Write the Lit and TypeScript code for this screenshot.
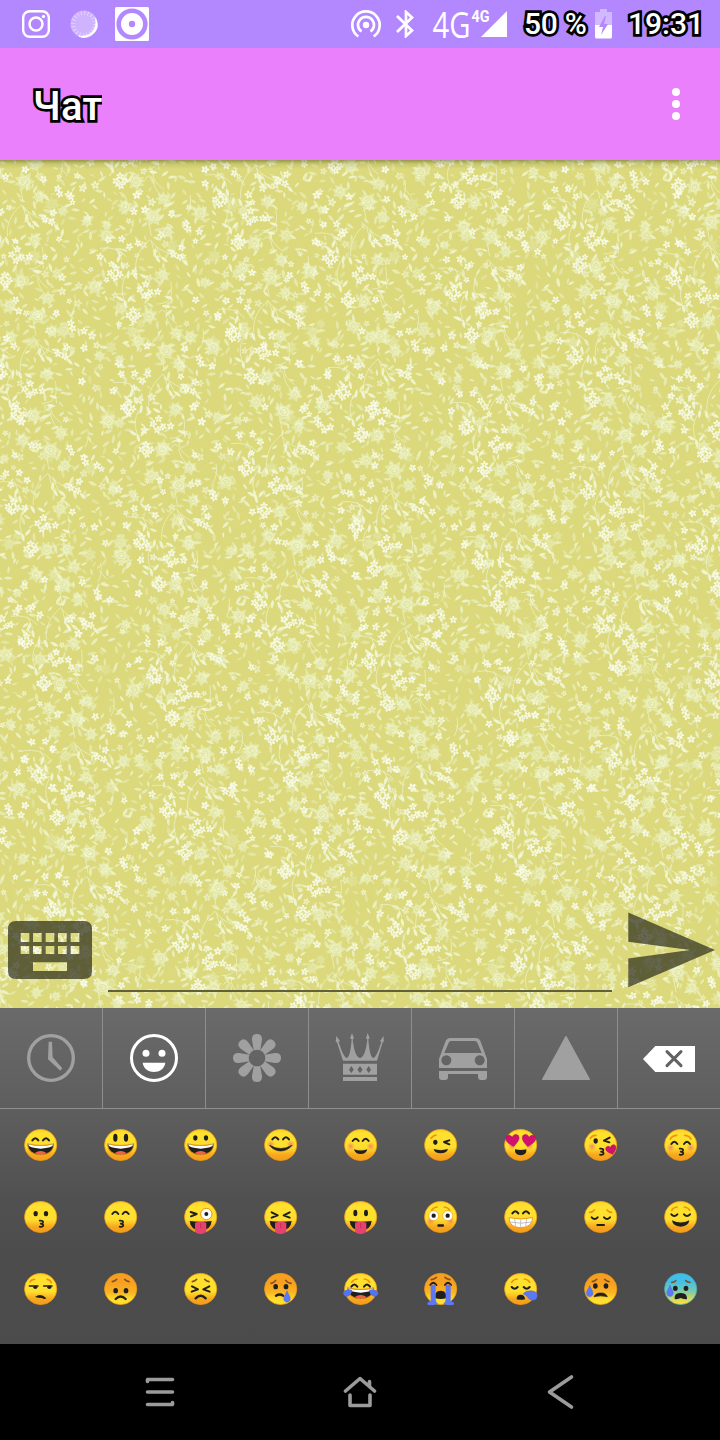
import { LitElement, html, svg, css } from "lit";
import { customElement } from "lit/decorators.js";

/* ---------- floral wallpaper, drawn in thirds of a pixel ---------- */

let seed = 77;
const rnd = () => {
  seed = (seed * 1664525 + 1013904223) >>> 0;
  return seed / 4294967296;
};

const leaf = (x: number, y: number, a: number, s = 1, o = 0.75) =>
  svg`<use href="#leaf" transform="translate(${x} ${y}) rotate(${a}) scale(${s})" opacity=${o}></use>`;
const star = (x: number, y: number, a: number, s = 1, o = 0.9) =>
  svg`<use href="#star" transform="translate(${x} ${y}) rotate(${a}) scale(${s})" opacity=${o}></use>`;
const rose = (x: number, y: number, a: number, s = 1, o = 0.75) =>
  svg`<use href="#rose" transform="translate(${x} ${y}) rotate(${a}) scale(${s})" opacity=${o}></use>`;

const roses: number[][] = [
  [8, -65, 0, 1.1], [52, -20, 60, 0.8], [40, -118, 20, 0.85], [-42, -170, 80, 0.95],
  [-165, 145, 10, 1], [38, 110, 40, 0.85], [-75, -95, 30, 0.9], [-130, -40, 0, 0.6], [-190, -50, 30, 0.7],
];
const stars: number[][] = [
  [-13, 138, 0], [-30, 154, 20], [0, 162, 40], [-17, 172, 10], [23, 160, 5],
  [-102, 90, 0], [-119, 104, 20], [-91, 108, 30], [-106, 118, 50],
  [-90, -187, 0], [-102, -172, 20], [-76, -172, 30], [-88, -158, 60],
  [-85, 2, 10], [-62, 25, 30], [-48, -80, 0], [70, 48, 0], [90, 56, 30], [95, 28, 20],
  [65, -72, 40], [-150, 55, 10], [-125, 4, 50], [108, -44, 10], [114, -28, 50],
  [148, -20, 0],
];
const leaves: number[][] = [
  [-66, 108, 100], [-45, 112, 70], [-20, 114, 30], [14, 42, 100], [22, 62, 60], [42, 64, 40],
  [62, 38, 10], [104, 72, 50], [-95, 60, 110], [-110, 78, 50], [-84, 82, 80], [-75, 196, 80],
  [-90, 182, 30], [-60, 180, 130], [55, 178, 20], [48, 205, 10],
];

const FIELD_W = 540;
const FIELD_H = 636;
const ambient: number[][] = [];
for (let gy = 0; gy < 23; gy++) {
  for (let gx = 0; gx < 18; gx++) {
    ambient.push([
      gx * 30 + rnd() * 28,
      gy * 27.65 + rnd() * 25,
      rnd() * 360,
      0.65 + rnd() * 0.5,
      0.3 + rnd() * 0.5,
      rnd(),
    ]);
  }
}

const field = svg`
  <g id="field">
    ${ambient.map(([x, y, a, s, o, k]) =>
      k < 0.035 ? rose(x, y, a, s * 0.8, o) : k < 0.17 ? star(x, y, a, s * 0.9, o + 0.15) : leaf(x, y, a, s * 1.05, o),
    )}
  </g>`;

const motif = svg`
  <g id="motif">
    <g class="stem">
      <path d="M0 4C-28 28-46 56-43 100M0 4C16 26 40 42 72 50M4 8L12 38M18 24L34 58"/>
      <path d="M62 130C68 170 66 196 20 197M62 172L66 196M48 206Q46 232 80 256"/>
      <path d="M-72 112Q-92 146-78 182M-150 30Q-100 22-70 56M-100 30L-84 66"/>
      <path d="M4-6L-2-40M8-180Q-4-196-14-178M8-178Q12-150 30-132"/>
      <path d="M120-130Q126-100 112-74M116-106L138-82"/>
    </g>
    ${leaves.map(([x, y, a]) => leaf(x, y, a, 1.1, 0.85))}
    ${roses.map(([x, y, a, s]) => rose(x, y, a, s))}
    ${stars.map(([x, y, a]) => star(x, y, a, 0.92, 0.85))}
  </g>`;

const columns: number[][] = [
  [-280, -30], [65, 130], [450, 235], [765, 15], [1095, 190], [1465, 295], [1790, 85], [2125, 250],
];
const placements: number[][] = [];
for (const [cx, cy] of columns) {
  for (let r = -1; r < 7; r++) placements.push([cx + r * 39, cy + r * 403]);
}
for (let r = 3; r < 7; r++) placements.push([-580 + r * 39, 60 + r * 403]);

const fieldSpots: number[][] = [];
for (let r = 0; r < 4; r++) {
  for (let c = -1; c < 4; c++) fieldSpots.push([c * FIELD_W + (r % 3) * 170, r * FIELD_H]);
}

/* ---------- emoji ---------- */

type Tone = "sun" | "sad" | "cold";
const K = "#1f1f1f";

const arc = (x: number, y: number, up = true, w = 9) =>
  svg`<path class="ink" d="M${x - w} ${y}Q${x} ${y + (up ? -13 : 10)} ${x + w} ${y}"/>`;
const dot = (x: number, y: number, rx = 6.5, ry = 8) => svg`<ellipse cx=${x} cy=${y} rx=${rx} ry=${ry} fill=${K}/>`;
const brow = (d: string, dark = false) => svg`<path class=${dark ? "brow dark" : "brow"} d=${d}/>`;
const blush = (y: number, x = 30) => svg`<circle cx=${-x} cy=${y} r="13" fill="url(#blush)"/><circle cx=${x} cy=${y} r="13" fill="url(#blush)"/>`;
const laugh = svg`
  <path d="M-40-4Q0 6 40-4Q37 29 0 29Q-37 29-40-4Z" fill=${K} stroke="#ee9412" stroke-width="2.5"/>
  <path d="M-38-2Q0 7 38-2Q36 9 0 11Q-36 9-38-2Z" fill="#fff"/>
  <path d="M-18 24Q0 12 18 24Q0 33-18 24Z" fill="#f0604d"/>`;
const tongue = svg`
  <path d="M-33 12Q0 16 33 12Q31 38 0 42Q-31 38-33 12Z" fill=${K}/>
  <path d="M-17 17Q0 12 17 17V40Q16 51 0 51Q-16 51-17 40Z" fill="#e5426f"/>
  <path d="M0 18V34" stroke="#b9264f" stroke-width="2"/>`;
const kiss = (x = 3, y = 20) =>
  svg`<path class="ink kiss" d="M${x - 6} ${y - 9}Q${x + 6} ${y - 10} ${x + 4} ${y - 3}Q${x + 2} ${y} ${x - 3} ${y}Q${x + 5} ${y + 1} ${x + 5} ${y + 6}Q${x + 3} ${y + 11} ${x - 6} ${y + 9}"/>`;
const heart = (x: number, y: number, s: number, a: number) =>
  svg`<path transform="translate(${x} ${y}) rotate(${a}) scale(${s})" d="M0 19C-12 9-21 2-20-8C-19-18-5-20 0-9C5-20 19-18 20-8C21 2 12 9 0 19Z" fill="#d0116f" stroke="#ad0f5c" stroke-width="1.5"/>`;
const squeeze = (y: number) =>
  svg`<path class="ink" d="M-27 ${y - 9}L-9 ${y}L-27 ${y + 7}M27 ${y - 9}L9 ${y}L27 ${y + 7}"/>`;
const drop = (x: number, y: number) =>
  svg`<path transform="translate(${x} ${y})" d="M0-18C3-8 10-2 10 6C10 20-10 20-10 6C-10-2-3-8 0-18Z" fill="#5b78f5" stroke="#4560d8" stroke-width="1"/>`;
const frown = (y: number, w = 15) => svg`<path class="ink fat" d="M${-w} ${y}Q0 ${y - 15} ${w} ${y}"/>`;

const worriedBrows = svg`${brow("M-25-22Q-16-23-12-29", true)}${brow("M25-22Q16-23 12-29", true)}`;
const softBrows = svg`${brow("M-31-18Q-24-29-12-29")}${brow("M31-18Q24-29 12-29")}`;
const highBrows = svg`${brow("M-27-20Q-22-29-11-30")}${brow("M27-20Q22-29 11-30")}`;

const faces: { tone: Tone; art: unknown }[] = [
  { tone: "sun", art: svg`${arc(-16, -14)}${arc(16, -14)}${laugh}` },
  { tone: "sun", art: svg`${dot(-16, -22, 6.5, 12)}${dot(16, -22, 6.5, 12)}${laugh}` },
  { tone: "sun", art: svg`${dot(-16, -21)}${dot(16, -21)}${laugh}` },
  { tone: "sun", art: svg`${blush(-2)}${arc(-16, -17)}${arc(16, -17)}<path d="M-33 1Q0 20 34 1Q22 17 0 18Q-22 17-33 1Z" fill=${K} stroke=${K} stroke-width="2"/>` },
  { tone: "sun", art: svg`${blush(4)}${arc(-15, -12)}${arc(15, -12)}<path d="M-20 13Q0 20 20 13Q17 27 0 27Q-17 27-20 13Z" fill=${K}/>` },
  { tone: "sun", art: svg`${brow("M-29-20Q-22-29-14-30")}${dot(-16, -8)}<path class="ink" d="M26-14L10-9L26-2"/><path d="M-21 12Q0 19 22 12Q18 25 0 25Q-18 25-21 12Z" fill=${K}/>` },
  { tone: "sun", art: svg`${blush(2, 26)}${heart(-24, -14, 1, -8)}${heart(24, -14, 1, 8)}<path d="M-17 13Q0 17 17 13Q19 30 0 31Q-19 30-17 13Z" fill=${K}/>` },
  { tone: "sun", art: svg`${brow("M-31-20Q-25-30-14-29")}<circle cx="-26" cy="5" r="13" fill="url(#blush)"/>${dot(-15, -12)}<path class="ink" d="M27-22L10-13L26-8"/>${kiss(4, 20)}${heart(32, 14, 0.78, -18)}` },
  { tone: "sun", art: svg`${softBrows}${blush(8)}${arc(-19, -3)}${arc(19, -3)}${kiss(3, 20)}` },
  { tone: "sun", art: svg`${dot(-15, -10)}${dot(16, -10)}${kiss(3, 20)}` },
  { tone: "sun", art: svg`${arc(-16, -9)}${arc(15, -9)}${kiss(3, 20)}` },
  { tone: "sun", art: svg`<path class="ink" d="M-30-15L-12-9L-29-2"/><circle cx="17" cy="-9" r="17" fill="#fff" stroke="#ed8e18" stroke-width="3"/>${dot(17, -9, 6, 6)}${tongue}` },
  { tone: "sun", art: svg`${squeeze(-5)}${tongue}` },
  { tone: "sun", art: svg`${dot(-16, -12, 6, 10)}${dot(16, -12, 6, 10)}${tongue}` },
  { tone: "sun", art: svg`${blush(12)}${highBrows}<circle cx="-21" cy="-4" r="15" fill="#fff" stroke="#ee9a17" stroke-width="2"/><circle cx="21" cy="-4" r="15" fill="#fff" stroke="#ee9a17" stroke-width="2"/>${dot(-21, -4, 6.5, 6.5)}${dot(21, -4, 6.5, 6.5)}<rect x="-10" y="22" width="20" height="7" rx="3" fill=${K}/>` },
  { tone: "sun", art: svg`${arc(-16, -11)}${arc(16, -11)}<path d="M-35 2Q0 10 36 2Q35 31 0 32Q-35 31-35 2Z" fill="#fff" stroke="#e88b10" stroke-width="2.5"/><path d="M-33 15Q0 22 34 15M-18 6L-15 28M0 8V31M18 6L15 28" fill="none" stroke="#b5b5b5" stroke-width="2.5"/>` },
  { tone: "sun", art: svg`${brow("M-33-14Q-24-14-19-21")}${brow("M33-14Q24-14 19-21")}${arc(-18, 1, false)}${arc(19, 1, false)}<path class="ink" d="M-10 24H10"/>` },
  { tone: "sun", art: svg`${highBrows}${arc(-19, -8, false)}${arc(19, -8, false)}<path d="M-26 10Q0 23 26 10Q24 28 0 29Q-24 28-26 10Z" fill=${K}/>` },
  { tone: "sun", art: svg`${brow("M-32-21Q-28-29-18-29")}${brow("M19-29Q28-29 32-19")}<path class="ink thin" d="M-34-9H-8M9-9H34"/>${dot(-16, -5, 6, 5)}${dot(26, -5, 6, 5)}<path d="M-17 24Q0 10 17 28Q13 33 3 27Q-8 27-17 24Z" fill=${K}/>` },
  { tone: "sad", art: svg`${worriedBrows}${dot(-15, 5, 7, 8)}${dot(16, 5, 7, 8)}${frown(30)}` },
  { tone: "sun", art: svg`${worriedBrows}<path class="ink" d="M-26-8L-8 1L-27 8M26-8L8 1L27 8"/>${frown(28)}` },
  { tone: "sad", art: svg`${brow("M-29-17Q-20-18-15-26", true)}${brow("M31-17Q20-18 15-26", true)}${dot(-15, -7, 7, 8)}${dot(16, -7, 7, 8)}<path class="ink fat" d="M-14 20Q-2 13 7 20"/>${drop(19, 23)}` },
  { tone: "sun", art: svg`${highBrows}${arc(-19, -7)}${arc(19, -7)}${laugh}<path d="M-25 2Q-29 22-42 23Q-57 19-51 7Q-43-1-25 2ZM25 2Q29 22 42 23Q57 19 51 7Q43-1 25 2Z" fill="#5572ef"/>` },
  { tone: "sad", art: svg`${brow("M-28-28Q-20-29-13-35", true)}${brow("M28-28Q20-29 13-35", true)}${arc(-22, -12)}${arc(22, -12)}<path d="M-16 28Q-20 5 0 5Q20 5 16 28Q0 32-16 28Z" fill=${K}/><path d="M-30-13H-15V32Q-14 40-8 44Q-20 51-40 47Q-42 40-30 36ZM15-13H30V36Q42 40 40 47Q20 51 8 44Q14 40 15 32Z" fill="#5d78f7"/>` },
  { tone: "sun", art: svg`${highBrows}${arc(-18, -6, false)}${arc(18, -6, false)}<path d="M-12 31Q-13 17 0 17Q13 17 13 31Q0 34-12 31Z" fill=${K}/><path d="M7 15Q14 4 32 5Q50 7 50 18Q50 33 38 34Q27 35 20 24Q14 16 7 15Z" fill="#5b78f5" stroke="#435fd8" stroke-width="1"/>` },
  { tone: "sad", art: svg`${worriedBrows}${dot(-16, -9, 7, 8)}${dot(16, -9, 7, 8)}<path d="M-20 23Q-14 11 0 12Q15 11 20 23Q0 18-20 23Z" fill=${K} stroke=${K} stroke-width="2"/>${drop(-33, 7)}` },
  { tone: "cold", art: svg`${brow("M-27-20Q-19-20-15-25", true)}${brow("M28-20Q20-20 15-25", true)}${dot(-16, -2, 7, 8)}${dot(16, -2, 7, 8)}<path d="M-18 30Q-20 11 0 12Q20 11 19 30Q16 33 0 27Q-15 33-18 30Z" fill=${K}/>${drop(-32, 6)}` },
];

const face = ({ tone, art }: { tone: Tone; art: unknown }) => html`
  <div class="cell">
    <svg class="emoji" viewBox="-56 -54 108 108">
      <ellipse rx="48.5" ry="47" fill="url(#${tone})" stroke=${tone === "cold" ? "#43a9b8" : "#ee950f"} stroke-width="2"></ellipse>
      ${art}
    </svg>
  </div>`;

/* ---------- category tabs, centred on the origin ---------- */

const tabs: { on?: boolean; art: unknown }[] = [
  { art: svg`<circle r="67" fill="none" stroke="currentColor" stroke-width="10"/><path d="M-7-49H3L5-2L34 31L28 38L-9 4Z" fill="currentColor"/>` },
  { on: true, art: svg`<circle r="67.5" fill="none" stroke="currentColor" stroke-width="9"/><circle cx="-24" cy="-14" r="10.5" fill="currentColor"/><circle cx="24" cy="-14" r="10.5" fill="currentColor"/><path d="M-34 14H34C29 51-29 51-34 14Z" fill="currentColor"/>` },
  { art: svg`${[0, 45, 90, 135, 180, 225, 270, 315].map((a) => svg`<path transform="rotate(${a})" d="M-9.500-23L-15-54Q-16-72 0-72Q16-72 15-54L9.500-23Q0-27-9.500-23Z" fill="currentColor"/>`)}` },
  { art: svg`<path fill-rule="evenodd" fill="currentColor" d="M-51 8L-69-47L-73-48L-71-66L-60-51L-64-48Q-50-3-40 0Q-29-2-25-56L-30-59L-24-75L-18-59L-22-56Q-16-2 0 0Q16-2 22-56L18-59L23-75L29-59L25-56Q29-2 40 0Q50-3 64-48L60-51L71-66L71-48L68-47L51 8ZM-51 17H51V50H-51ZM-26 24L-33 35L-26 45L-19 35ZM0 24L-8 35L0 45L8 35ZM26 24L19 35L26 45L33 35ZM-51 57H51V69H-51Z"/>` },
  { art: svg`<path fill-rule="evenodd" fill="currentColor" d="M-72 30V3L-53-49Q-49-60-38-60H38Q49-60 53-49L72 3V30ZM-56-15H56L43-46Q41-51 36-51H-36Q-41-51-43-46ZM-50-8A15 15 0 1 0-49.900-8ZM50-8A15 15 0 1 0 50.100-8Z"/><path fill="currentColor" d="M-72 39H72V57Q72 66 63 66H54Q45 66 45 57V48H-45V57Q-45 66-54 66H-63Q-72 66-72 57Z"/>` },
  { art: svg`<path d="M0-64L70 64H-70Z" fill="currentColor" stroke="currentColor" stroke-width="4" stroke-linejoin="round"/>` },
  { on: true, art: svg`<path d="M-78 3L-41-36H78V42H-41Z" fill="currentColor"/><path d="M-6-19L36 23M36-19L-6 23" stroke="#626262" stroke-width="9" stroke-linecap="round"/>` },
];

@customElement("app-root")
export class AppRoot extends LitElement {
  static styles = css`
    :host {
      display: flex;
      flex-direction: column;
      width: 720px;
      height: 1440px;
      overflow: hidden;
      font-family: Roboto, sans-serif;
      color: #fff;
    }
    svg { display: block; flex: none; }
    .defs { position: absolute; width: 0; height: 0; }
    .status {
      height: 48px;
      flex: none;
      display: flex;
      align-items: center;
      justify-content: space-between;
      padding: 0 18px 0 22px;
      box-sizing: border-box;
      background: #b388ff;
    }
    .notes { display: flex; align-items: center; }
    .insta { margin-right: 20px; }
    .spin { margin-right: 17px; }
    .system { display: flex; align-items: center; }
    .outlined {
      font-weight: 500;
      -webkit-text-stroke: 5.4px #000;
      paint-order: stroke fill;
      stroke-linejoin: round;
      white-space: pre;
    }
    .pct { font-size: 30px; line-height: 50px; width: 63px; margin-left: 17px; letter-spacing: -0.3px; }
    .time { font-size: 30px; line-height: 50px; margin-left: 16px; width: 74px; }
    .batt { margin-left: 8px; }
    .bt { margin-left: 14px; }
    .net { margin-left: 19px; overflow: visible; }
    .bar {
      height: 112px;
      flex: none;
      display: flex;
      align-items: center;
      justify-content: space-between;
      padding: 0 38px 0 31px;
      box-sizing: border-box;
      background: #ea80fc;
    }
    .title { font-size: 40px; line-height: 48px; padding: 5px 0 0 2px; width: 69px; overflow: hidden; letter-spacing: 0.3px; }
    .chat {
      height: 848px;
      flex: none;
      display: grid;
      background: #dbd97c;
      overflow: hidden;
    }
    .paper, .front { grid-area: 1 / 1; }
    .front {
      position: relative;
      display: flex;
      align-items: flex-end;
      background: linear-gradient(rgba(70, 70, 10, 0.45), rgba(70, 70, 10, 0.12) 4px, transparent 9px);
    }
    .stem { fill: none; stroke: #f0f5cf; stroke-width: 2.6; opacity: 0.8; }
    .keys { margin: 0 16px 29px 8px; }
    .field { flex: 1; height: 2px; margin-bottom: 16px; background: #62613a; }
    .send { margin: 0 4px 20px 16px; }
    .panel {
      height: 336px;
      flex: none;
      background: linear-gradient(#6a6a6a, #5e5e5e 30%, #515151 56%, #4c4c4c 75%, #4b4b4b);
    }
    .tabs {
      display: grid;
      grid-template-columns: repeat(7, 102px);
      column-gap: 1px;
      height: 100px;
      border-bottom: 1px solid #8e8e8e;
    }
    .tab {
      display: flex;
      align-items: center;
      justify-content: center;
      color: #a0a0a0;
      box-shadow: 1px 0 #8e8e8e;
    }
    .tab:last-child { box-shadow: none; }
    .tab.on { color: #fff; }
    .grid { display: grid; grid-template-columns: repeat(9, 80px); grid-auto-rows: 72px; }
    .cell { display: flex; align-items: center; justify-content: center; }
    .ink { fill: none; stroke: #1f1f1f; stroke-width: 6; stroke-linecap: round; stroke-linejoin: round; }
    .ink.fat { stroke-width: 7; }
    .ink.thin { stroke-width: 4.5; }
    .ink.kiss { stroke-width: 5; }
    .emoji { width: 36px; height: 36px; overflow: visible; }
    .brow { fill: none; stroke: #ed930f; stroke-width: 5; stroke-linecap: round; }
    .brow.dark { stroke: #865029; }
    .nav {
      height: 96px;
      flex: none;
      display: grid;
      grid-template-columns: repeat(3, 200px);
      justify-content: center;
      background: #000;
    }
    .key { display: flex; align-items: center; justify-content: center; }
    .line { fill: none; stroke: #9b9b9b; stroke-width: 3.6; stroke-linecap: round; stroke-linejoin: round; }
  `;

  private defs() {
    return html`<svg class="defs">
      <defs>
        <linearGradient id="sun" x2="0" y2="1">
          <stop offset="0" stop-color="#fdd42d"></stop><stop offset=".16" stop-color="#ffe12e"></stop>
          <stop offset=".58" stop-color="#ffdf2d"></stop><stop offset=".82" stop-color="#f7a61e"></stop>
          <stop offset="1" stop-color="#f59c1c"></stop>
        </linearGradient>
        <linearGradient id="sad" x2="0" y2="1">
          <stop offset=".3" stop-color="#f7a01f"></stop><stop offset=".6" stop-color="#f9b323"></stop>
          <stop offset=".85" stop-color="#ffe02e"></stop>
        </linearGradient>
        <linearGradient id="cold" x2="0" y2="1">
          <stop offset=".25" stop-color="#3fbfea"></stop><stop offset=".55" stop-color="#77c9ae"></stop>
          <stop offset=".92" stop-color="#f2df46"></stop>
        </linearGradient>
        <radialGradient id="blush">
          <stop offset="0" stop-color="#f07a62" stop-opacity=".85"></stop>
          <stop offset="1" stop-color="#f58a5a" stop-opacity="0"></stop>
        </radialGradient>
      </defs>
    </svg>`;
  }

  private wallpaper() {
    return html`<svg class="paper" width="720" height="848" viewBox="0 0 2160 2544">
      <defs>
        <path id="leaf" d="M-12 0Q-3-9 13-2Q4 8-12 0Z" fill="#f3f8da"></path>
        <g id="star">
          ${[0, 72, 144, 216, 288].map((a) => svg`<ellipse transform="rotate(${a})" cy="-7" rx="3.800" ry="6" fill="#fafdee"/>`)}
          <circle r="2.500" fill="#dfe3a0"></circle>
        </g>
        <g id="rose">
          <path d="M-26-12L-12-14L-10-28L2-16L18-24L16-8L30 0L16 8L18 24L2 17L-12 26L-13 12L-28 8L-17 0Z" fill="#eef4c8" opacity=".75"></path>
          <circle r="15" fill="#f3f8d5"></circle>
          <path d="M-9 2Q-8-10 3-9Q12-5 8 5Q1 11-5 5Q-5-3 2-3M-13 8Q-4 17 8 12" fill="none" stroke="#dbe19c" stroke-width="2.500"></path>
        </g>
        ${field} ${motif}
      </defs>
      ${fieldSpots.map(([x, y]) => svg`<use href="#field" x=${x} y=${y}></use>`)}
      ${placements.map(([x, y]) => svg`<use href="#motif" x=${x} y=${y}></use>`)}
    </svg>`;
  }

  render() {
    return html`
      ${this.defs()}
      <header class="status">
        <div class="notes">
          <svg class="insta" width="28" height="28" viewBox="0 0 28 28" fill="none" stroke="#fff">
            <rect x="1.200" y="1.200" width="25.600" height="25.600" rx="6.500" stroke-width="2.400"></rect>
            <circle cx="14" cy="14" r="6.500" stroke-width="2.500"></circle>
            <circle cx="21.500" cy="6.500" r="1.700" fill="#fff" stroke="none"></circle>
          </svg>
          <svg class="spin" width="28" height="28" viewBox="0 0 28 28" fill="none">
            <circle cx="14" cy="14" r="13.500" fill="#cfb3ff"></circle>
            <circle cx="14" cy="14" r="11" stroke="#e4d4ff" stroke-width="4" stroke-dasharray="1 2.450"></circle>
            <path d="M25.500 8Q31 19 21 25.500Q14 29.500 8.500 26Q18 27 22.500 21.500Q27 16 25.500 8Z" fill="#fff" stroke="#fff" stroke-width=".6"></path>
          </svg>
          <svg width="34" height="34" viewBox="0 0 34 34">
            <rect width="34" height="34" rx="1.500" fill="#fff"></rect>
            <circle cx="17" cy="17" r="13.300" fill="none" stroke="#b388ff" stroke-width="4.600"></circle>
            <circle cx="17" cy="17" r="3.200" fill="#b388ff"></circle>
          </svg>
        </div>
        <div class="system">
          <svg width="32" height="30" viewBox="0 0 32 30" fill="none" stroke="#fff" stroke-width="2.700">
            <path d="M8.300 27.500A13.700 13.700 0 1 1 23.700 27.500M11.500 22.500A8 8 0 1 1 20.500 22.500"></path>
            <circle cx="16" cy="16" r="3.200" fill="#fff" stroke="none"></circle>
          </svg>
          <svg class="bt" width="18" height="28" viewBox="0 0 18 28" fill="none" stroke="#fff" stroke-width="2.700">
            <path d="M1 6L16 20.500L10 26V2L16 7.500L1 22"></path>
          </svg>
          <svg class="net" width="74" height="32" viewBox="0 0 74 32" fill="#fff">
            <text x="-.500" y="29.500" font-family="Open Sans, sans-serif" font-size="36" font-weight="400" textLength="38" lengthAdjust="spacingAndGlyphs">4G</text>
            <text x="38.500" y="14" font-family="Roboto, sans-serif" font-size="16" font-weight="700" textLength="18" lengthAdjust="spacingAndGlyphs">4G</text>
            <path d="M48 29L74 3V29Z"></path>
          </svg>
          <span class="outlined pct">50 %</span>
          <svg class="batt" width="17" height="30" viewBox="0 0 17 30">
            <path d="M5 0H12V3H17V17H0V3H5Z" fill="#d1b8ff"></path>
            <path d="M0 16H17V28Q17 29.500 15.500 29.500H1.500Q0 29.500 0 28Z" fill="#fff"></path>
            <path d="M10 7L4 18H8L6 26L13 15H9L11 7Z" fill="#b388ff"></path>
          </svg>
          <span class="outlined time">19:31</span>
        </div>
      </header>
      <div class="bar">
        <span class="outlined title">Чат</span>
        <svg width="12" height="32" viewBox="0 0 12 32" fill="#fff">
          <circle cx="6" cy="4" r="4"></circle><circle cx="6" cy="16" r="4"></circle><circle cx="6" cy="28" r="4"></circle>
        </svg>
      </div>
      <main class="chat">
        ${this.wallpaper()}
        <div class="front">
          <svg class="keys" width="84" height="58" viewBox="0 0 252 174">
            <path fill="rgba(42,42,25,.7)" fill-rule="evenodd" d="M24 0H228Q252 0 252 24V150Q252 174 228 174H24Q0 174 0 150V24Q0 0 24 0ZM38 36V63H64V36ZM75 36V63H101V36ZM113 36V63H139V36ZM150 36V63H176V36ZM188 36V63H214V36ZM38 75V99H64V75ZM75 75V99H101V75ZM113 75V99H139V75ZM150 75V99H176V75ZM188 75V99H214V75ZM75 124V150H177V124Z"></path>
          </svg>
          <div class="field"></div>
          <svg class="send" width="88" height="76" viewBox="0 0 88 76">
            <path fill="rgba(42,42,25,.7)" d="M.300.500L87 38L.300 75.200V46.500L62 38L.300 29.700Z"></path>
          </svg>
        </div>
      </main>
      <section class="panel">
        <div class="tabs">
          ${tabs.map((t) => html`<div class="tab ${t.on ? "on" : ""}"><svg width="54" height="54" viewBox="-81 -81 162 162">${t.art}</svg></div>`)}
        </div>
        <div class="grid">${faces.map(face)}</div>
      </section>
      <footer class="nav">
        <div class="key"><svg class="line" width="32" height="32" viewBox="-16 -16 32 32"><path d="M-12.500-10.500V-12.500H12.500M-12.500 0H12.500M-12.500 12.500H12.500V10.500"></path></svg></div>
        <div class="key"><svg class="line" width="34" height="34" viewBox="-17 -17 34 34"><path d="M-14.500-1L0-13.500L14.500-1M9.500-6V-10.500M-10 3V13.500H10V3"></path></svg></div>
        <div class="key"><svg class="line" width="34" height="36" viewBox="-17 -18 34 36"><path d="M11.500-15L-10.500 0L11.500 15"></path></svg></div>
      </footer>`;
  }
}
